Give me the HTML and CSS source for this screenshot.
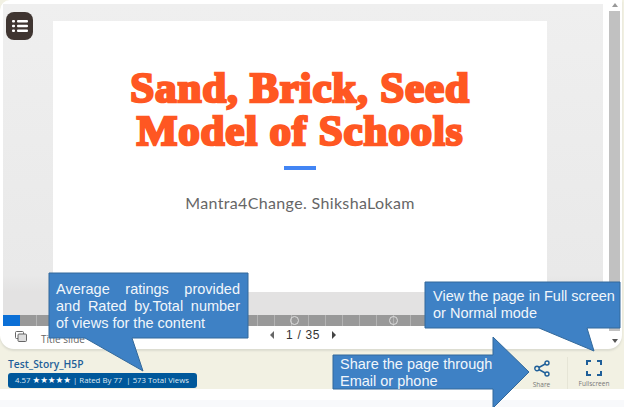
FILE: index.html
```html
<!DOCTYPE html>
<html lang="en">
<head>
    <meta charset="UTF-8">
    <meta name="viewport" content="width=device-width, initial-scale=1.0">
    <title>Test_Story_H5P</title>
    <link rel="stylesheet" href="styles.css">
</head>
<body>
    <div class="frame">
        <div class="player">
            <div class="stage">
                <div class="viewer">
                    <button class="menu-btn">
                        <svg width="16" height="14" viewBox="0 0 16 14">
                            <rect x="0" y="1" width="3" height="2.4" rx="1" fill="#fff"/>
                            <rect x="0" y="5.8" width="3" height="2.4" rx="1" fill="#fff"/>
                            <rect x="0" y="10.6" width="3" height="2.4" rx="1" fill="#fff"/>
                            <rect x="5" y="1" width="11" height="2.4" rx="1" fill="#fff"/>
                            <rect x="5" y="5.8" width="11" height="2.4" rx="1" fill="#fff"/>
                            <rect x="5" y="10.6" width="11" height="2.4" rx="1" fill="#fff"/>
                        </svg>
                    </button>
                    <div class="slide">
                        <h1>Sand, Brick, Seed<br>Model of Schools</h1>
                        <div class="rule"></div>
                        <p>Mantra4Change. ShikshaLokam</p>
                    </div>
                </div>
                <div class="progress">
                    <span class="mark mark-a"></span>
                    <span class="mark mark-b"></span>
                </div>
                <div class="controls">
                    <svg class="layers" width="12" height="11" viewBox="0 0 12 11">
                        <rect x="0.5" y="0.5" width="8" height="7" rx="1" fill="none" stroke="#666"/>
                        <rect x="3" y="3" width="8.5" height="7.5" rx="1" fill="#ddd" stroke="#666"/>
                    </svg>
                    <span class="slide-title">Title slide</span>
                    <div class="pager">
                        <span class="tri tri-left"></span>
                        <span>1 / 35</span>
                        <span class="tri tri-right"></span>
                    </div>
                </div>
            </div>
            <div class="rail">
                <span class="rail-up"></span>
                <div class="thumb"></div>
                <span class="rail-down"></span>
            </div>
        </div>
        <div class="info">
            <div>
                <div class="name">Test_Story_H5P</div>
                <div class="badge">4.57 <span class="stars">★★★★★</span> | Rated By 77 &nbsp;| 573 Total Views</div>
            </div>
            <div class="actions">
                <div class="action action-share">
                    <svg width="16" height="17" viewBox="0 0 16 17">
                        <path d="M13 3 L3 8.5 L13 14" fill="none" stroke="#1f5f99" stroke-width="1.5"/>
                        <circle cx="13" cy="3" r="2" fill="#f2f1e3" stroke="#1f5f99" stroke-width="1.4"/>
                        <circle cx="3" cy="8.5" r="2.2" fill="#f2f1e3" stroke="#1f5f99" stroke-width="1.4"/>
                        <circle cx="13" cy="14" r="2" fill="#f2f1e3" stroke="#1f5f99" stroke-width="1.4"/>
                    </svg>
                    <span>Share</span>
                </div>
                <div class="action">
                    <svg width="16" height="16" viewBox="0 0 16 16">
                        <path d="M1 5 V1 H5 M11 1 H15 V5 M15 11 V15 H11 M5 15 H1 V11" fill="none" stroke="#1f5f99" stroke-width="2"/>
                    </svg>
                    <span>Fullscreen</span>
                </div>
            </div>
        </div>
    </div>
    <div class="strip"></div>

    <svg class="shapes" width="624" height="407" viewBox="0 0 624 407">
        <polygon points="49,273 248,273 248,338 132,338 143,371 85,338 49,338"/>
        <polygon points="425,282 620,282 620,328 587,328 594,351 539,328 425,328"/>
        <polygon points="333,355 493,355 493,337 529,372 493,408 493,389 333,389"/>
    </svg>
    <div class="note note-ratings">Average ratings provided and Rated by.Total number of views for the content</div>
    <div class="note note-view">View the page in Full screen or Normal mode</div>
    <div class="note note-share">Share the page through Email or phone</div>
</body>
</html>
```

FILE: styles.css
```css
html, body {
    margin: 0;
    padding: 0;
}

body {
    width: 624px;
    height: 407px;
    overflow: hidden;
    background: #fff;
    font-family: "Open Sans", sans-serif;
    position: relative;
}

.frame {
    background: #f2f1e3;
    height: 389px;
    padding-right: 2px;
    box-sizing: border-box;
}

.strip {
    height: 7px;
    margin-top: 11px;
    background: #f8f9fb;
}

.player {
    height: 349px;
    padding-left: 3px;
    background: #fff;
    border-radius: 10px 0 14px 14px;
    box-shadow: 0 2px 2px #dcdcd0;
    display: flex;
    overflow: hidden;
}

.stage {
    width: 600px;
    display: flex;
    flex-direction: column;
}

.viewer {
    margin-top: 4px;
    height: 311px;
    padding: 17px 56px 0 50px;
    box-sizing: border-box;
    background: #e3e2e2;
    background-image: linear-gradient(#efefef, #e9e9e9 271px, #e3e2e2 288px);
    position: relative;
}

.menu-btn {
    position: absolute;
    left: 3px;
    top: 8px;
    width: 27px;
    height: 28px;
    border: none;
    padding: 0;
    border-radius: 8px;
    background: #3f3531;
    display: flex;
    align-items: center;
    justify-content: center;
}

.slide {
    height: 271px;
    background: #fff;
    text-align: center;
    overflow: hidden;
}

.slide h1 {
    margin: 45px 0 0;
    font-family: "Liberation Serif", serif;
    font-weight: 700;
    font-size: 43px;
    line-height: 43px;
    letter-spacing: 0.85px;
    color: #ff5722;
    -webkit-text-stroke: 2.6px #ff5722;
}

.rule {
    width: 32px;
    height: 4px;
    margin: 14px auto 0;
    background: #4285f4;
}

.slide p {
    margin: 23px 0 0;
    font-family: "Lato", sans-serif;
    font-size: 16px;
    letter-spacing: 0.35px;
    color: #666;
}

.progress {
    height: 11px;
    background-color: #999;
    background-image: linear-gradient(90deg, #0b6fd6 17px, transparent 17px), repeating-linear-gradient(90deg, #999 0, #999 16px, #b4b4b4 16px, #b4b4b4 17px);
    position: relative;
}

.mark {
    position: absolute;
    top: 1px;
    width: 7px;
    height: 7px;
    border: 1px solid #ddd;
    border-radius: 50%;
}

.mark-a { left: 287px; }
.mark-b { left: 386px; }

.controls {
    flex: 1;
    display: flex;
    align-items: center;
    position: relative;
    padding-left: 12px;
    font-size: 10px;
    color: #666;
}

.layers {
    margin-top: -3px;
}

.slide-title {
    margin-left: 14px;
    margin-top: 2px;
}

.pager {
    position: absolute;
    left: 267px;
    top: 2px;
    display: flex;
    align-items: center;
    gap: 12px;
    font-family: "Liberation Sans", sans-serif;
    font-size: 12px;
    letter-spacing: 0.7px;
    color: #333;
}

.tri {
    width: 0;
    height: 0;
    border-top: 4px solid transparent;
    border-bottom: 4px solid transparent;
}

.tri-left { border-right: 4px solid #666; }
.tri-right { border-left: 4px solid #444; }

.rail {
    width: 11px;
    margin-left: 6px;
    display: flex;
    flex-direction: column;
    align-items: center;
}

.rail-up, .rail-down {
    width: 0;
    height: 0;
    border-left: 3px solid transparent;
    border-right: 3px solid transparent;
}

.rail-up {
    margin: 3px 0 4px;
    border-bottom: 4px solid #999;
}

.thumb {
    width: 100%;
    height: 320px;
    background: #c1c1c1;
}

.rail-down {
    margin-top: 8px;
    border-top: 4px solid #555;
}

.info {
    display: flex;
    justify-content: space-between;
    padding: 8px 2px 0 8px;
}

.name {
    font-size: 10.3px;
    font-weight: 600;
    line-height: 14px;
    color: #1f5f99;
}

.badge {
    margin-top: 2px;
    width: 189px;
    height: 15px;
    box-sizing: border-box;
    padding-left: 7px;
    border-radius: 3px;
    background: #00589b;
    color: #dfe9f2;
    font-size: 7.8px;
    line-height: 15px;
    white-space: nowrap;
}

.stars {
    color: #fff;
    font-family: "DejaVu Sans", sans-serif;
    font-size: 8.6px;
}

.actions {
    display: flex;
}

.action {
    width: 52px;
    display: flex;
    flex-direction: column;
    align-items: center;
    gap: 3px;
    padding-top: 3px;
    font-size: 6.5px;
    color: #777;
}

.action-share {
    width: 51px;
    border-right: 1px solid #e6e5d6;
}

.shapes {
    position: absolute;
    left: 0;
    top: 0;
}

.shapes polygon {
    fill: #3e81c5;
    stroke: #33699b;
    stroke-width: 1;
}

.note {
    position: absolute;
    font-family: "Liberation Sans", sans-serif;
    font-size: 14.5px;
    line-height: 17px;
    color: #f1f6fb;
}

.note-ratings {
    left: 56px;
    top: 281px;
    width: 184px;
    text-align: justify;
}

.note-view {
    left: 433px;
    top: 288px;
    width: 186px;
}

.note-share {
    left: 340px;
    top: 356px;
    width: 160px;
}
```
